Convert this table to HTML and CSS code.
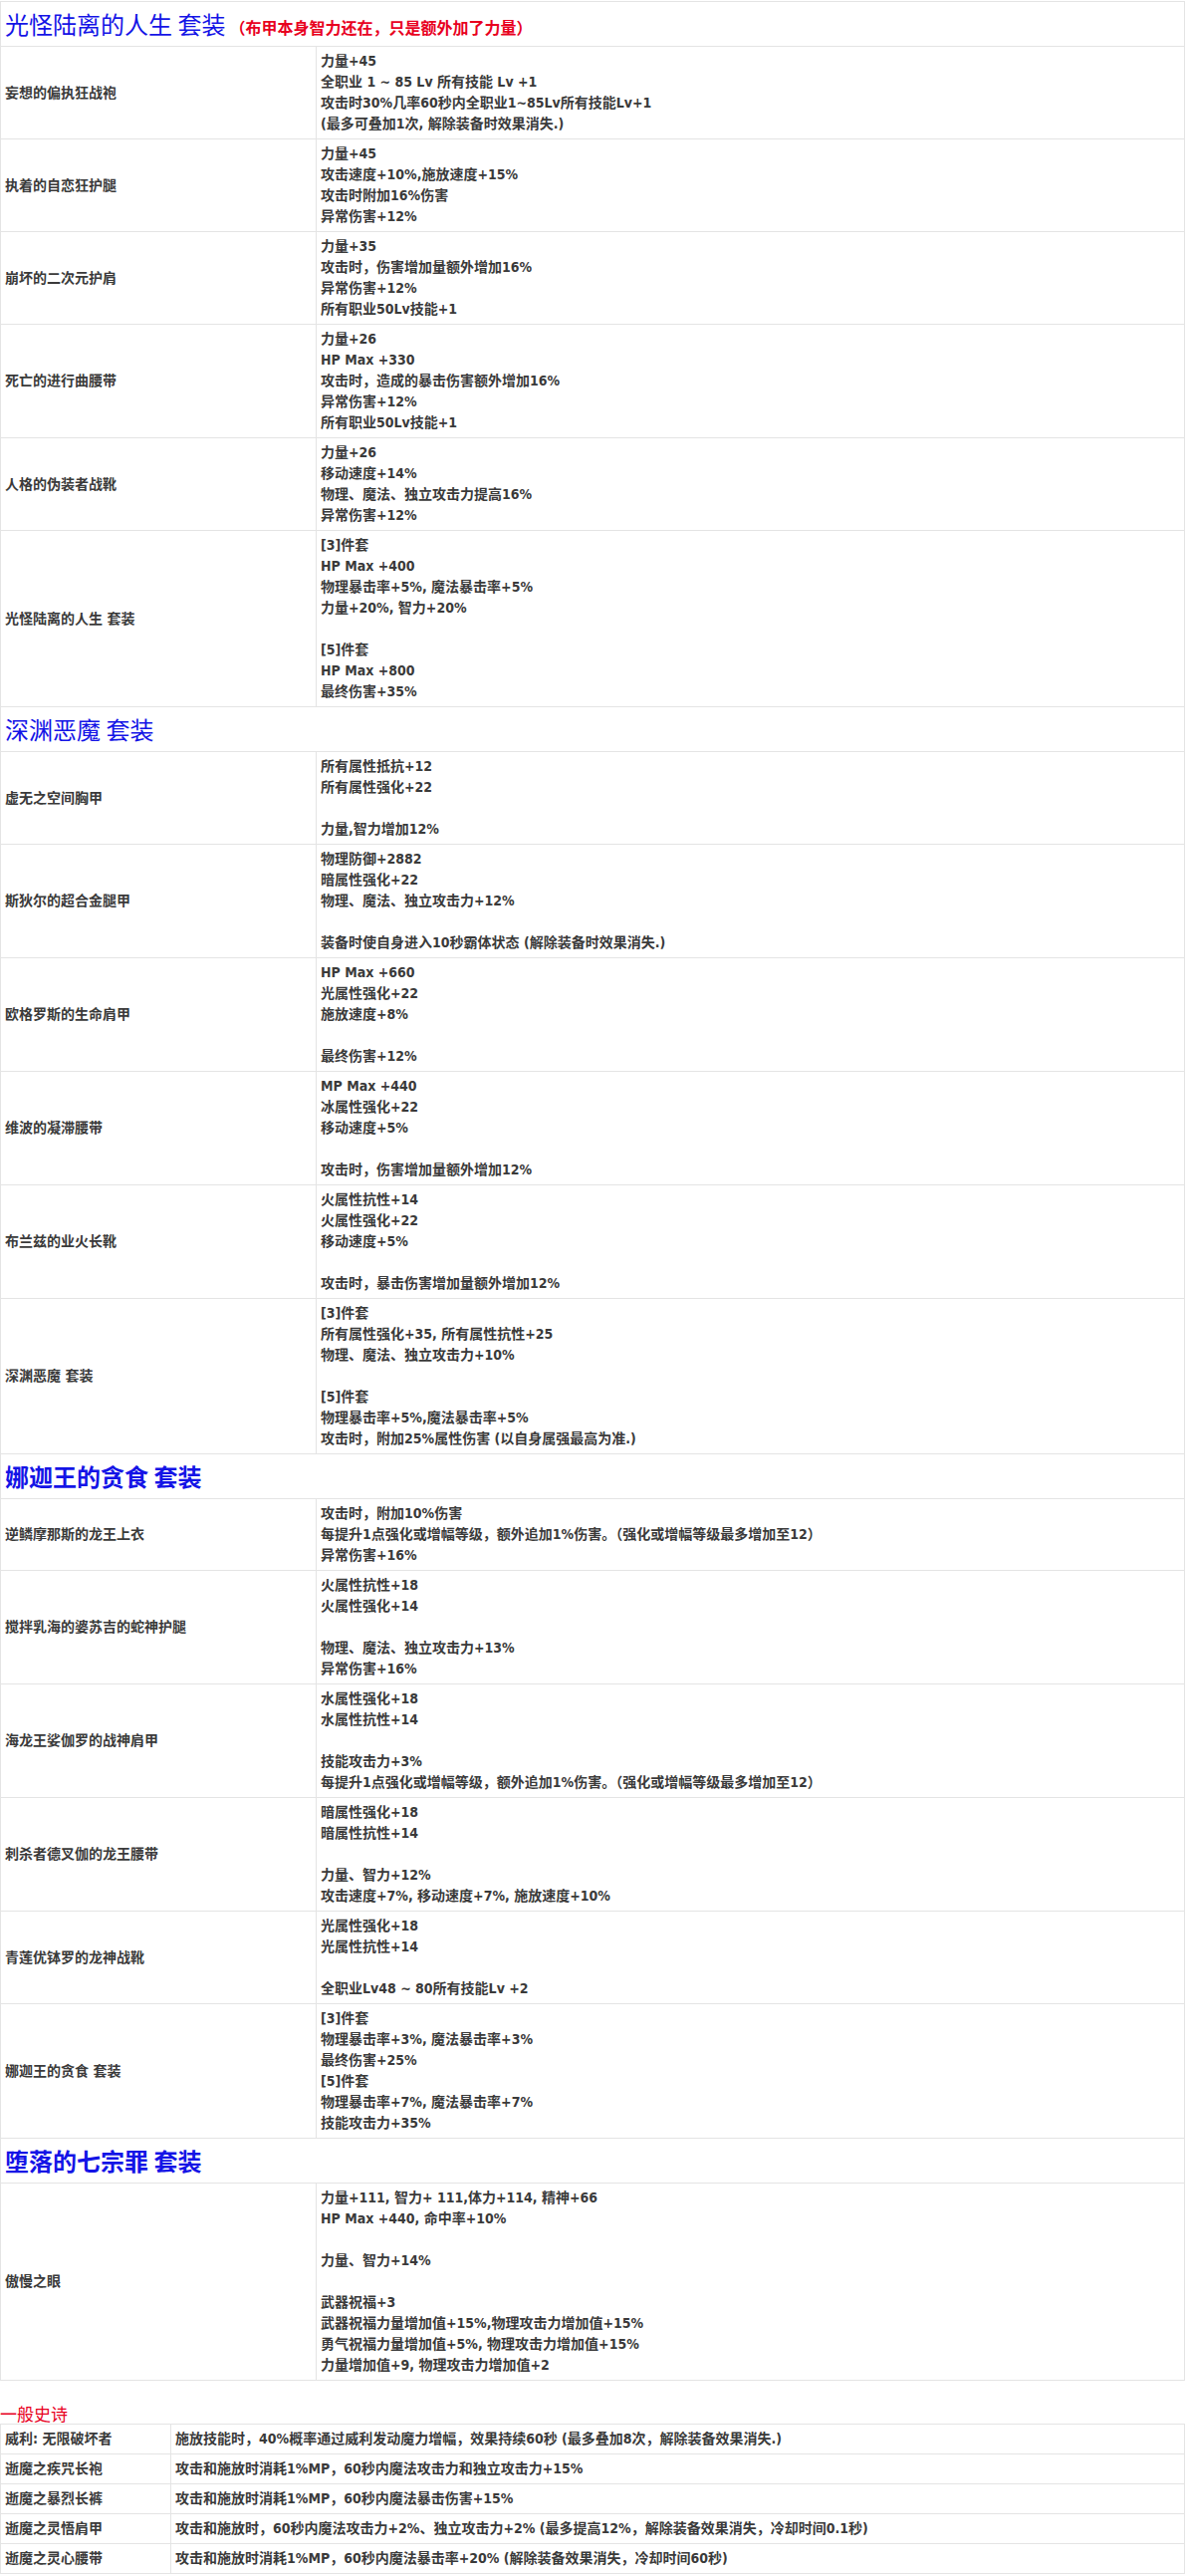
FILE: index.html
```html
<!DOCTYPE html>
<html lang="zh-CN">
<head>
<meta charset="utf-8">
<title>套装属性</title>
<link rel="stylesheet" href="styles.css">
</head>
<body>
<table class="grid main">
<colgroup><col class="c-name"><col></colgroup>
<tbody>
<tr class="set-head"><td colspan="2"><div class="hd"><span class="set-title">光怪陆离的人生 套装</span><span class="note">（布甲本身智力还在，只是额外加了力量）</span></div></td></tr>
<tr><td><div class="ln">妄想的偏执狂战袍</div></td><td><div class="ln">力量+45</div><div class="ln">全职业 1 ~ 85 Lv 所有技能 Lv +1</div><div class="ln">攻击时30%几率60秒内全职业1~85Lv所有技能Lv+1</div><div class="ln">(最多可叠加1次, 解除装备时效果消失.)</div></td></tr>
<tr><td><div class="ln">执着的自恋狂护腿</div></td><td><div class="ln">力量+45</div><div class="ln">攻击速度+10%,施放速度+15%</div><div class="ln">攻击时附加16%伤害</div><div class="ln">异常伤害+12%</div></td></tr>
<tr><td><div class="ln">崩坏的二次元护肩</div></td><td><div class="ln">力量+35</div><div class="ln">攻击时，伤害增加量额外增加16%</div><div class="ln">异常伤害+12%</div><div class="ln">所有职业50Lv技能+1</div></td></tr>
<tr><td><div class="ln">死亡的进行曲腰带</div></td><td><div class="ln">力量+26</div><div class="ln">HP Max +330</div><div class="ln">攻击时，造成的暴击伤害额外增加16%</div><div class="ln">异常伤害+12%</div><div class="ln">所有职业50Lv技能+1</div></td></tr>
<tr><td><div class="ln">人格的伪装者战靴</div></td><td><div class="ln">力量+26</div><div class="ln">移动速度+14%</div><div class="ln">物理、魔法、独立攻击力提高16%</div><div class="ln">异常伤害+12%</div></td></tr>
<tr><td><div class="ln">光怪陆离的人生 套装</div></td><td><div class="ln">[3]件套</div><div class="ln">HP Max +400</div><div class="ln">物理暴击率+5%, 魔法暴击率+5%</div><div class="ln">力量+20%, 智力+20%</div><div class="ln"></div><div class="ln">[5]件套</div><div class="ln">HP Max +800</div><div class="ln">最终伤害+35%</div></td></tr>

<tr class="set-head"><td colspan="2"><div class="hd"><span class="set-title">深渊恶魔 套装</span></div></td></tr>
<tr><td><div class="ln">虚无之空间胸甲</div></td><td><div class="ln">所有属性抵抗+12</div><div class="ln">所有属性强化+22</div><div class="ln"></div><div class="ln">力量,智力增加12%</div></td></tr>
<tr><td><div class="ln">斯狄尔的超合金腿甲</div></td><td><div class="ln">物理防御+2882</div><div class="ln">暗属性强化+22</div><div class="ln">物理、魔法、独立攻击力+12%</div><div class="ln"></div><div class="ln">装备时使自身进入10秒霸体状态 (解除装备时效果消失.)</div></td></tr>
<tr><td><div class="ln">欧格罗斯的生命肩甲</div></td><td><div class="ln">HP Max +660</div><div class="ln">光属性强化+22</div><div class="ln">施放速度+8%</div><div class="ln"></div><div class="ln">最终伤害+12%</div></td></tr>
<tr><td><div class="ln">维波的凝滞腰带</div></td><td><div class="ln">MP Max +440</div><div class="ln">冰属性强化+22</div><div class="ln">移动速度+5%</div><div class="ln"></div><div class="ln">攻击时，伤害增加量额外增加12%</div></td></tr>
<tr><td><div class="ln">布兰兹的业火长靴</div></td><td><div class="ln">火属性抗性+14</div><div class="ln">火属性强化+22</div><div class="ln">移动速度+5%</div><div class="ln"></div><div class="ln">攻击时，暴击伤害增加量额外增加12%</div></td></tr>
<tr><td><div class="ln">深渊恶魔 套装</div></td><td><div class="ln">[3]件套</div><div class="ln">所有属性强化+35, 所有属性抗性+25</div><div class="ln">物理、魔法、独立攻击力+10%</div><div class="ln"></div><div class="ln">[5]件套</div><div class="ln">物理暴击率+5%,魔法暴击率+5%</div><div class="ln">攻击时，附加25%属性伤害 (以自身属强最高为准.)</div></td></tr>

<tr class="set-head"><td colspan="2"><div class="hd"><span class="set-title strong">娜迦王的贪食 套装</span></div></td></tr>
<tr><td><div class="ln">逆鳞摩那斯的龙王上衣</div></td><td><div class="ln">攻击时，附加10%伤害</div><div class="ln">每提升1点强化或增幅等级，额外追加1%伤害。（强化或增幅等级最多增加至12）</div><div class="ln">异常伤害+16%</div></td></tr>
<tr><td><div class="ln">搅拌乳海的婆苏吉的蛇神护腿</div></td><td><div class="ln">火属性抗性+18</div><div class="ln">火属性强化+14</div><div class="ln"></div><div class="ln">物理、魔法、独立攻击力+13%</div><div class="ln">异常伤害+16%</div></td></tr>
<tr><td><div class="ln">海龙王娑伽罗的战神肩甲</div></td><td><div class="ln">水属性强化+18</div><div class="ln">水属性抗性+14</div><div class="ln"></div><div class="ln">技能攻击力+3%</div><div class="ln">每提升1点强化或增幅等级，额外追加1%伤害。（强化或增幅等级最多增加至12）</div></td></tr>
<tr><td><div class="ln">刺杀者德叉伽的龙王腰带</div></td><td><div class="ln">暗属性强化+18</div><div class="ln">暗属性抗性+14</div><div class="ln"></div><div class="ln">力量、智力+12%</div><div class="ln">攻击速度+7%, 移动速度+7%, 施放速度+10%</div></td></tr>
<tr><td><div class="ln">青莲优钵罗的龙神战靴</div></td><td><div class="ln">光属性强化+18</div><div class="ln">光属性抗性+14</div><div class="ln"></div><div class="ln">全职业Lv48 ~ 80所有技能Lv +2</div></td></tr>
<tr><td><div class="ln">娜迦王的贪食 套装</div></td><td><div class="ln">[3]件套</div><div class="ln">物理暴击率+3%, 魔法暴击率+3%</div><div class="ln">最终伤害+25%</div><div class="ln">[5]件套</div><div class="ln">物理暴击率+7%, 魔法暴击率+7%</div><div class="ln">技能攻击力+35%</div></td></tr>

<tr class="set-head"><td colspan="2"><div class="hd"><span class="set-title strong">堕落的七宗罪 套装</span></div></td></tr>
<tr><td><div class="ln">傲慢之眼</div></td><td><div class="ln">力量+111, 智力+ 111,体力+114, 精神+66</div><div class="ln">HP Max +440, 命中率+10%</div><div class="ln"></div><div class="ln">力量、智力+14%</div><div class="ln"></div><div class="ln">武器祝福+3</div><div class="ln">武器祝福力量增加值+15%,物理攻击力增加值+15%</div><div class="ln">勇气祝福力量增加值+5%, 物理攻击力增加值+15%</div><div class="ln">力量增加值+9, 物理攻击力增加值+2</div></td></tr>
</tbody>
</table>

<div class="epic-title">一般史诗</div>
<table class="grid epic">
<colgroup><col class="c-epic"><col></colgroup>
<tbody>
<tr><td><div class="ln">威利: 无限破坏者</div></td><td><div class="ln">施放技能时，40%概率通过威利发动魔力增幅，效果持续60秒 (最多叠加8次，解除装备效果消失.)</div></td></tr>
<tr><td><div class="ln">逝魔之疾咒长袍</div></td><td><div class="ln">攻击和施放时消耗1%MP，60秒内魔法攻击力和独立攻击力+15%</div></td></tr>
<tr><td><div class="ln">逝魔之暴烈长裤</div></td><td><div class="ln">攻击和施放时消耗1%MP，60秒内魔法暴击伤害+15%</div></td></tr>
<tr><td><div class="ln">逝魔之灵悟肩甲</div></td><td><div class="ln">攻击和施放时，60秒内魔法攻击力+2%、独立攻击力+2% (最多提高12%，解除装备效果消失，冷却时间0.1秒)</div></td></tr>
<tr><td><div class="ln">逝魔之灵心腰带</div></td><td><div class="ln">攻击和施放时消耗1%MP，60秒内魔法暴击率+20% (解除装备效果消失，冷却时间60秒)</div></td></tr>
</tbody>
</table>
</body>
</html>
```

FILE: styles.css
```css
html, body {
  margin: 0;
  padding: 0;
  background: #ffffff;
}

body {
  font-family: "DejaVu Sans Condensed", "DejaVu Sans", "Noto Sans CJK SC", sans-serif;
  font-stretch: condensed;
  font-size: 14px;
  font-weight: bold;
  color: #3a3a3a;
}

.grid {
  border-collapse: collapse;
  table-layout: fixed;
  width: 1190px;
}

.grid td {
  border: 1px solid #e4e4e4;
  padding: 4px 4px;
  vertical-align: middle;
  text-align: left;
}

.ln {
  height: 21px;
  line-height: 21px;
  white-space: nowrap;
  overflow: visible;
}

.main {
  margin-top: 1px;
}

.c-name {
  width: 317px;
}

.c-epic {
  width: 171px;
}

.hd {
  height: 36px;
  line-height: 36px;
  white-space: nowrap;
  overflow: visible;
}

.set-title {
  font-family: "Noto Sans CJK SC", sans-serif;
  font-size: 24px;
  font-weight: normal;
  color: #1414e6;
}

.set-title.strong {
  font-weight: bold;
}

.note {
  font-family: "Noto Sans CJK SC", sans-serif;
  font-size: 16px;
  font-weight: bold;
  color: #e8001e;
  margin-left: 4px;
}

.epic-title {
  font-family: "Noto Sans CJK SC", sans-serif;
  font-size: 17px;
  font-weight: normal;
  color: #e8001e;
  line-height: 20px;
  height: 20px;
  padding-top: 23px;
}
```
